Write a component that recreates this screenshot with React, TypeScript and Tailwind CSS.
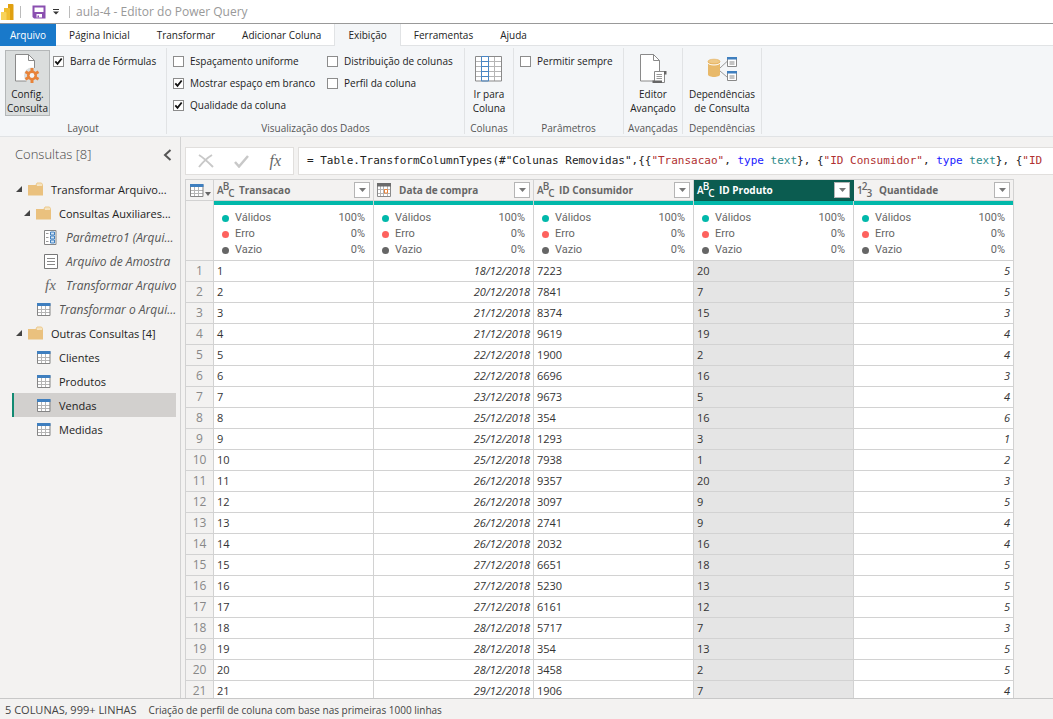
import React, { useState } from "react";
import clsx from "clsx";

type IconProps = { className?: string };

function PowerBiLogo() {
  return (
    <svg width="14" height="18" viewBox="0 0 14 18" aria-hidden="true">
      <path d="M8 1h4.500a1 1 0 0 1 1 1v15H8z" fill="#e0a010" />
      <path d="M4 5h5a1 1 0 0 1 1 1v11H4z" fill="#f0bd30" />
      <path d="M1 9h4.500a1 1 0 0 1 1 1v7H1z" fill="#f8d35a" />
    </svg>
  );
}

function SaveIcon() {
  return (
    <svg width="14" height="14" viewBox="0 0 14 14" aria-hidden="true">
      <path d="M1.500 1.500h11v11h-10l-1-1z" fill="#fff" stroke="#8a4fb0" strokeWidth="2" />
      <path d="M2 7h10v5H2z" fill="#8a4fb0" />
      <path d="M4.500 9h5.500v3.500H4.500z" fill="#fff" />
      <path d="M5.500 10.500h1.500v2H5.500z" fill="#8a4fb0" />
    </svg>
  );
}

function PageShape() {
  return (
    <>
      <path d="M1.500 1.500h13l6 6V28h-19z" fill="#fff" stroke="#8a8a8a" />
      <path d="M14.500 1.500v6h6z" fill="#fff" stroke="#8a8a8a" />
    </>
  );
}

function ConfigIcon() {
  return (
    <svg width="27" height="32" viewBox="0 0 27 32" aria-hidden="true">
      <PageShape />
      <circle cx="18" cy="22.500" r="8" fill="#dadddd" />
      <g stroke="#e8833a" strokeWidth="3">
        <path d="M18 15v15M11.500 18.750l13 7.500M11.500 26.250l13-7.500" />
      </g>
      <circle cx="18" cy="22.500" r="5" fill="#e8833a" />
      <circle cx="18" cy="22.500" r="2.400" fill="#f4f6f8" />
    </svg>
  );
}

function EditorIcon() {
  return (
    <svg width="28" height="32" viewBox="0 0 28 32" aria-hidden="true">
      <PageShape />
      <path d="M15.500 18.500h10v11h-10z" fill="#fff" stroke="#888" />
      <path d="M25 18h2.500v3.500H25zM13.500 27.500h9.500V30h-9.500z" fill="#666" />
      <path d="M17.500 21.500h5.500M17.500 23.500h5.500M17.500 25.500h5.500" stroke="#999" />
    </svg>
  );
}

function GoToColumnIcon() {
  return (
    <svg width="28" height="26" viewBox="0 0 28 26" aria-hidden="true">
      <path d="M.5.500h26v24H.5z" fill="#fff" />
      <path d="M1 5.500h26M1 10.500h26M1 15.500h26M1 20.500h26M19.500 1v24" stroke="#b5b5b5" />
      <path d="M.5.500h26v24.500H.5z" fill="none" stroke="#8a8a8a" />
      <path d="M6.500.500h7v24.500h-7zM6.500 5.500h7M6.500 10.500h7M6.500 15.500h7M6.500 20.500h7" fill="none" stroke="#4a86c4" />
    </svg>
  );
}

function DependenciesIcon() {
  return (
    <svg width="31" height="26" viewBox="0 0 31 26" aria-hidden="true">
      <path d="M13 12l7-6.500M13 15l7 6" stroke="#999" fill="none" />
      <path d="M1 5.500v13c0 3.300 12 3.300 12 0v-13z" fill="#e8b96a" />
      <ellipse cx="7" cy="5.500" rx="6" ry="2.300" fill="#efc988" stroke="#e3a94f" strokeWidth=".6" />
      <path d="M1 7c1 2.600 11 2.600 12 0" fill="none" stroke="#fff" />
      <path d="M20.500 1.500h9v9h-9zM20.500 15.500h9v9h-9z" fill="#fff" stroke="#888" />
      <path d="M20 1h10v2.500H20zM20 15h10v2.500H20z" fill="#3f7fbf" />
      <path d="M22.500 6h5M22.500 8h5M22.500 20h5M22.500 22h5" stroke="#888" />
    </svg>
  );
}

function TableIcon({ className }: IconProps) {
  return (
    <svg className={clsx("shrink-0", className)} width="14" height="13" viewBox="0 0 14 13" aria-hidden="true">
      <path d="M.5.500h12v12H.5z" fill="#fff" />
      <path d="M4.500 3v9M8.500 3v9M1 6.500h12M1 9.500h12" stroke="#b5b5b5" />
      <path d="M.5.500h12.500v12H.5z" fill="none" stroke="#858585" />
      <path d="M0 0h13.500v3H0z" fill="#3f7fbf" />
    </svg>
  );
}

function DateIcon() {
  return (
    <svg className="shrink-0" width="16" height="14" viewBox="0 0 16 14" aria-hidden="true">
      <path d="M.5.500h13v13H.5z" fill="#fff" stroke="#8a8a8a" />
      <path d="M3.500 3v10M6.500 3v10M10.500 3v10M1 6.500h12M1 10.500h12" stroke="#b5b5b5" />
      <path d="M0 0h14v3.500H0z" fill="#6b6b6b" />
      <path d="M7.500 6.500h3v3.500h-3z" fill="#fff" stroke="#e8833a" />
    </svg>
  );
}

function FolderIcon({ className }: IconProps) {
  return (
    <svg className={className} width="15" height="14" viewBox="0 0 15 14" aria-hidden="true">
      <path d="M8 3l1-2h4.500l1 1.500V5" fill="#f6e3bd" stroke="#ecc98b" />
      <path d="M0 3h8.500l1 1H15v9.500H0z" fill="#eac17e" />
    </svg>
  );
}

function ParameterIcon({ className }: IconProps) {
  return (
    <svg className={className} width="13" height="15" viewBox="0 0 13 15" aria-hidden="true">
      <path d="M.5.500h11.500v14H.5z" fill="#fff" stroke="#858585" />
      <path d="M2 3.500h2.500M2 7.500h2.500M2 11.500h2.500" stroke="#999" />
      <path d="M6.500 2h4v3h-4zM6.500 6h4v3h-4zM6.500 10h4v3h-4z" fill="#cfe2f3" stroke="#3f7fbf" />
    </svg>
  );
}

function ListIcon({ className }: IconProps) {
  return (
    <svg className={className} width="14" height="15" viewBox="0 0 14 15" aria-hidden="true">
      <path d="M.5.500h13v14H.5z" fill="#fff" stroke="#777" />
      <path d="M3 4.500h8M3 7.500h8M3 10.500h8" stroke="#888" />
    </svg>
  );
}

function Fx({ className }: IconProps) {
  return <span className={clsx("font-['Liberation_Serif',serif] italic leading-none text-[#666]", className)}>fx</span>;
}

function TypeIcon({ glyphs }: { glyphs: string }) {
  return (
    <span className="flex h-4 w-4 shrink-0 text-[10px] leading-[9px] font-semibold" aria-hidden="true">
      <span className="self-center">{glyphs[0]}</span>
      <span className="-ml-px">{glyphs[1]}</span>
      <span className="-ml-px self-end">{glyphs[2]}</span>
    </span>
  );
}

function Check({ label, checked = false }: { label: string; checked?: boolean }) {
  return (
    <label className="flex h-[22px] items-center gap-1.5 whitespace-nowrap">
      <span className="relative flex h-[11px] w-[11px] shrink-0">
        <input
          type="checkbox"
          defaultChecked={checked}
          className="peer h-[11px] w-[11px] appearance-none border border-[#8c8c8c] bg-white"
        />
        <svg
          className="pointer-events-none absolute inset-0 hidden peer-checked:block"
          width="11"
          height="11"
          viewBox="0 0 11 11"
        >
          <path d="M2.300 5.300l2.200 2.500 4.200-5.300" fill="none" stroke="#111" strokeWidth="1.800" />
        </svg>
      </span>
      {label}
    </label>
  );
}

function Group({ title, className, children }: { title: string; className: string; children?: React.ReactNode }) {
  return (
    <section className={clsx("my-0.5 flex shrink-0 flex-col border-r border-[#e1e3e5] pt-0.5", className)}>
      <div className="flex h-[66px] shrink-0 justify-center">{children}</div>
      <h2 className="text-center leading-6 whitespace-nowrap text-[#555]">{title}</h2>
    </section>
  );
}

function BigButton({ icon, lines, active = false }: { icon: React.ReactNode; lines: string[]; active?: boolean }) {
  return (
    <button
      className={clsx(
        "flex h-[66px] flex-col items-center justify-between whitespace-nowrap border",
        active ? "w-[45px] border-[#b4b7b8] bg-[#dadddd]" : "border-transparent",
      )}
    >
      <span className="flex h-9 items-center">{icon}</span>
      <span className="leading-[14px]">
        {lines[0]}
        <br />
        {lines[1]}
      </span>
    </button>
  );
}

const tabs = ["Página Inicial", "Transformar", "Adicionar Coluna", "Exibição", "Ferramentas", "Ajuda"];

type Node = {
  label: string;
  kind: "folder" | "param" | "list" | "fx" | "table";
  indent: string;
  italic?: boolean;
};

const tree: Node[] = [
  { label: "Transformar Arquivo...", kind: "folder", indent: "pl-0.5" },
  { label: "Consultas Auxiliares...", kind: "folder", indent: "pl-2.5" },
  { label: "Parâmetro1 (Arqui...", kind: "param", indent: "pl-[29px]", italic: true },
  { label: "Arquivo de Amostra", kind: "list", indent: "pl-[29px]", italic: true },
  { label: "Transformar Arquivo", kind: "fx", indent: "pl-[29px]", italic: true },
  { label: "Transformar o Arqui...", kind: "table", indent: "pl-[22px]", italic: true },
  { label: "Outras Consultas [4]", kind: "folder", indent: "pl-0.5" },
  { label: "Clientes", kind: "table", indent: "pl-[22px]" },
  { label: "Produtos", kind: "table", indent: "pl-[22px]" },
  { label: "Vendas", kind: "table", indent: "pl-[22px]" },
  { label: "Medidas", kind: "table", indent: "pl-[22px]" },
];

function NodeIcon({ kind }: { kind: Node["kind"] }) {
  if (kind === "folder") return <FolderIcon />;
  if (kind === "param") return <ParameterIcon />;
  if (kind === "list") return <ListIcon />;
  if (kind === "fx") return <Fx className="text-[15px]" />;
  return <TableIcon />;
}

const columns = [
  { name: "Transacao", type: "text" },
  { name: "Data de compra", type: "date" },
  { name: "ID Consumidor", type: "text" },
  { name: "ID Produto", type: "text" },
  { name: "Quantidade", type: "number" },
];

const rows = [
  ["18/12/2018", 7223, 20, 5],
  ["20/12/2018", 7841, 7, 5],
  ["21/12/2018", 8374, 15, 3],
  ["21/12/2018", 9619, 19, 4],
  ["22/12/2018", 1900, 2, 4],
  ["22/12/2018", 6696, 16, 3],
  ["23/12/2018", 9673, 5, 4],
  ["25/12/2018", 354, 16, 6],
  ["25/12/2018", 1293, 3, 1],
  ["25/12/2018", 7938, 1, 2],
  ["26/12/2018", 9357, 20, 3],
  ["26/12/2018", 3097, 9, 5],
  ["26/12/2018", 2741, 9, 4],
  ["26/12/2018", 2032, 16, 4],
  ["27/12/2018", 6651, 18, 5],
  ["27/12/2018", 5230, 13, 5],
  ["27/12/2018", 6161, 12, 5],
  ["28/12/2018", 5717, 7, 3],
  ["28/12/2018", 354, 13, 5],
  ["28/12/2018", 3458, 2, 5],
  ["29/12/2018", 1906, 7, 4],
];

const quality = [
  { label: "Válidos", value: "100%", dot: "bg-[#01b8aa]" },
  { label: "Erro", value: "0%", dot: "bg-[#fd625e]" },
  { label: "Vazio", value: "0%", dot: "bg-[#666666]" },
];

function DataGrid() {
  const [selected, setSelected] = useState(3);
  return (
    <table className="w-[829px] table-fixed border-separate border-spacing-0 border-t border-l border-[#d2d2d2] bg-white text-[11px] text-[#333]">
      <colgroup>
        <col className="w-7" />
        {columns.map((c) => (
          <col key={c.name} className="w-40" />
        ))}
      </colgroup>
      <thead>
        <tr className="h-[21px]">
          <th className="border-r border-b border-[#d2d2d2] bg-[#f3f2f1] p-0">
            <button className="flex h-5 w-full items-center gap-px pl-1" aria-label="Opções da tabela">
              <TableIcon />
              <svg width="6" height="4" viewBox="0 0 6 4" className="mt-2 shrink-0">
                <path d="M0 0h6L3 4z" fill="#666" />
              </svg>
            </button>
          </th>
          {columns.map((c, i) => (
            <th
              key={c.name}
              onClick={() => setSelected(i)}
              className={clsx(
                "border-r border-b p-0 font-bold",
                i === selected
                  ? "border-[#0b5c50] bg-[#0b5c50] text-white"
                  : "border-[#d2d2d2] bg-[#f3f2f1] text-[#666]",
              )}
            >
              <div className="flex h-5 items-center px-[3px]">
                {c.type === "date" ? <DateIcon /> : <TypeIcon glyphs={c.type === "text" ? "ABC" : "123"} />}
                <span className="flex-1 pl-1.5 text-left text-[10px]">{c.name}</span>
                <button
                  className="flex h-4 w-4 items-center justify-center border border-[#b5b5b5] bg-white"
                  aria-label={`Filtrar ${c.name}`}
                >
                  <svg width="7" height="4" viewBox="0 0 7 4">
                    <path d="M0 0h7L3.500 4z" fill="#777" />
                  </svg>
                </button>
              </div>
            </th>
          ))}
        </tr>
        <tr className="h-[60px]">
          <td className="border-r border-b border-[#d2d2d2] bg-[#f3f2f1]" />
          {columns.map((c) => (
            <td key={c.name} className="border-r border-b border-[#d2d2d2] p-0 align-top">
              <div className="h-1 bg-[#01b8aa]" />
              <ul className="px-2 pt-[5px] font-[Roboto,sans-serif] text-[#666]">
                {quality.map((q) => (
                  <li key={q.label} className="flex h-4 items-center gap-1.5">
                    <span className={clsx("h-[7px] w-[7px] rounded-full", q.dot)} />
                    <span className="flex-1">{q.label}</span>
                    <span>{q.value}</span>
                  </li>
                ))}
              </ul>
            </td>
          ))}
        </tr>
      </thead>
      <tbody>
        {rows.map((r, n) => (
          <tr key={n} className="h-[21px]">
            <th className="border-r border-b border-[#d2d2d2] bg-[#f3f2f1] p-0 text-[12px] leading-5 font-normal text-[#888]">
              {n + 1}
            </th>
            {[n + 1, ...r].map((v, i) => (
              <td
                key={i}
                className={clsx(
                  "border-r border-b border-[#d2d2d2] px-[3px] py-0 leading-5 font-medium",
                  (i === 1 || i === 4) && "text-right italic",
                  i === selected && "bg-[#e5e5e5]",
                )}
              >
                {v}
              </td>
            ))}
          </tr>
        ))}
      </tbody>
    </table>
  );
}

export default function App() {
  const [tab, setTab] = useState("Exibição");
  const [query, setQuery] = useState("Vendas");
  return (
    <div className="flex h-screen flex-col overflow-hidden bg-[#f3f2f1] font-['Open_Sans','Noto_Sans',sans-serif] text-[10px] text-[#222]">
      <header className="flex h-6 shrink-0 items-center border-b border-[#999] bg-white">
        <PowerBiLogo />
        <span className="ml-1.5 h-3 w-px bg-[#bbb]" />
        <button className="ml-[11px]" aria-label="Salvar">
          <SaveIcon />
        </button>
        <button className="ml-[7px]" aria-label="Personalizar">
          <svg width="6" height="6" viewBox="0 0 6 6">
            <path d="M0 .500h6" stroke="#333" />
            <path d="M0 2.500h6l-3 3z" fill="#333" />
          </svg>
        </button>
        <span className="ml-2.5 h-3 w-px bg-[#bbb]" />
        <h1 className="ml-1.5 text-[12px] text-[#999]">aula-4 - Editor do Power Query</h1>
      </header>

      <nav className="flex h-[22px] shrink-0 bg-white">
        <button className="z-10 w-14 bg-[#1979ca] text-white">Arquivo</button>
        <div className="flex flex-1 border-b border-[#e1e3e5]">
          {tabs.map((t) => (
            <button
              key={t}
              onClick={() => setTab(t)}
              className={clsx(
                "-mb-px -ml-px border-x px-[13px] whitespace-nowrap",
                tab === t ? "border-[#e1e3e5] bg-[#f4f6f8]" : "border-transparent",
              )}
            >
              {t}
            </button>
          ))}
        </div>
      </nav>

      <div className="flex h-[91px] shrink-0 border-b border-[#e1e3e5] bg-[#f4f6f8]">
        <Group title="Layout" className="w-[167px]">
          <div className="flex flex-1 gap-[3px] pl-[5px]">
            <BigButton icon={<ConfigIcon />} lines={["Config.", "Consulta"]} active />
            <Check label="Barra de Fórmulas" checked />
          </div>
        </Group>
        <Group title="Visualização dos Dados" className="w-[298px]">
          <div className="grid flex-1 grid-flow-col grid-cols-[154px_1fr] grid-rows-[22px_22px_22px] pl-1.5">
            <Check label="Espaçamento uniforme" />
            <Check label="Mostrar espaço em branco" checked />
            <Check label="Qualidade da coluna" checked />
            <Check label="Distribuição de colunas" />
            <Check label="Perfil da coluna" />
          </div>
        </Group>
        <Group title="Colunas" className="w-[49px]">
          <BigButton icon={<GoToColumnIcon />} lines={["Ir para", "Coluna"]} />
        </Group>
        <Group title="Parâmetros" className="w-[110px]">
          <div className="flex-1 pl-1.5">
            <Check label="Permitir sempre" />
          </div>
        </Group>
        <Group title="Avançadas" className="w-[59px]">
          <BigButton icon={<EditorIcon />} lines={["Editor", "Avançado"]} />
        </Group>
        <Group title="Dependências" className="w-[79px]">
          <BigButton icon={<DependenciesIcon />} lines={["Dependências", "de Consulta"]} />
        </Group>
      </div>

      <main className="flex min-h-0 flex-1">
        <aside className="w-[181px] shrink-0 border-r border-[#d2d2d2] pr-1 pl-3">
          <div className="flex h-10 items-center justify-between pr-1 pb-1 pl-[3px]">
            <h2 className="text-[13px] font-light text-[#444]">Consultas [8]</h2>
            <button aria-label="Recolher">
              <svg width="9" height="12" viewBox="0 0 9 12">
                <path d="M7.500 1L2 6l5.500 5" fill="none" stroke="#555" strokeWidth="2" />
              </svg>
            </button>
          </div>
          <ul>
            {tree.map((n) => (
              <li key={n.label}>
                <button
                  onClick={() => setQuery(n.label)}
                  className={clsx(
                    "flex h-6 w-full items-center border-l-2 whitespace-nowrap",
                    n.indent,
                    n.italic ? "text-[12px] text-[#555] italic" : "text-[11px]",
                    query === n.label ? "border-[#118a72] bg-[#d2d0ce]" : "border-transparent",
                  )}
                >
                  {n.kind === "folder" && (
                    <svg className="mr-1.5 shrink-0" width="6" height="6" viewBox="0 0 6 6">
                      <path d="M6 0v6H0z" fill="#444" />
                    </svg>
                  )}
                  <span className="mr-2 flex w-[15px] shrink-0 justify-center">
                    <NodeIcon kind={n.kind} />
                  </span>
                  <span className="pt-0.5">{n.label}</span>
                </button>
              </li>
            ))}
          </ul>
        </aside>

        <section className="flex min-w-0 flex-1 flex-col pt-2.5 pl-1">
          <div className="flex h-7 shrink-0 gap-1">
            <div className="flex w-[109px] shrink-0 items-center justify-between border border-[#e1dfdd] bg-white px-3">
              <button aria-label="Cancelar">
                <svg width="16" height="14" viewBox="0 0 16 14">
                  <path d="M1 1c5 3 10 8 14 12M14 1C9 4 5 8 1 13" fill="none" stroke="#c8c8c8" strokeWidth="2" />
                </svg>
              </button>
              <button aria-label="Confirmar">
                <svg width="15" height="13" viewBox="0 0 15 13">
                  <path d="M1 7l4 4.500L14 1" fill="none" stroke="#c8c8c8" strokeWidth="2.500" />
                </svg>
              </button>
              <Fx className="text-[16px]" />
            </div>
            <code className="flex-1 overflow-hidden border border-r-0 border-[#e1dfdd] bg-white pl-2 font-['DejaVu_Sans_Mono',monospace] text-[11px] leading-[26px] whitespace-pre text-[#222]">
              {'= Table.TransformColumnTypes(#"Colunas Removidas",{{'}
              <span className="text-[#b03030]">"Transacao"</span>, <span className="text-[#1a1aff]">type</span>{" "}
              <span className="text-[#2b8a8a]">text</span>
              {"}, {"}
              <span className="text-[#b03030]">"ID Consumidor"</span>, <span className="text-[#1a1aff]">type</span>{" "}
              <span className="text-[#2b8a8a]">text</span>
              {"}, {"}
              <span className="text-[#b03030]">"ID</span>
            </code>
          </div>
          <div className="mt-1 min-h-0 flex-1 overflow-hidden">
            <DataGrid />
          </div>
        </section>
      </main>

      <footer className="flex h-[21px] shrink-0 items-center gap-3 border-t border-[#c8c8c8] pt-0.5 pl-[5px] text-[#444]">
        <span className="text-[11px]">5 COLUNAS, 999+ LINHAS</span>
        <span>Criação de perfil de coluna com base nas primeiras 1000 linhas</span>
      </footer>
    </div>
  );
}
